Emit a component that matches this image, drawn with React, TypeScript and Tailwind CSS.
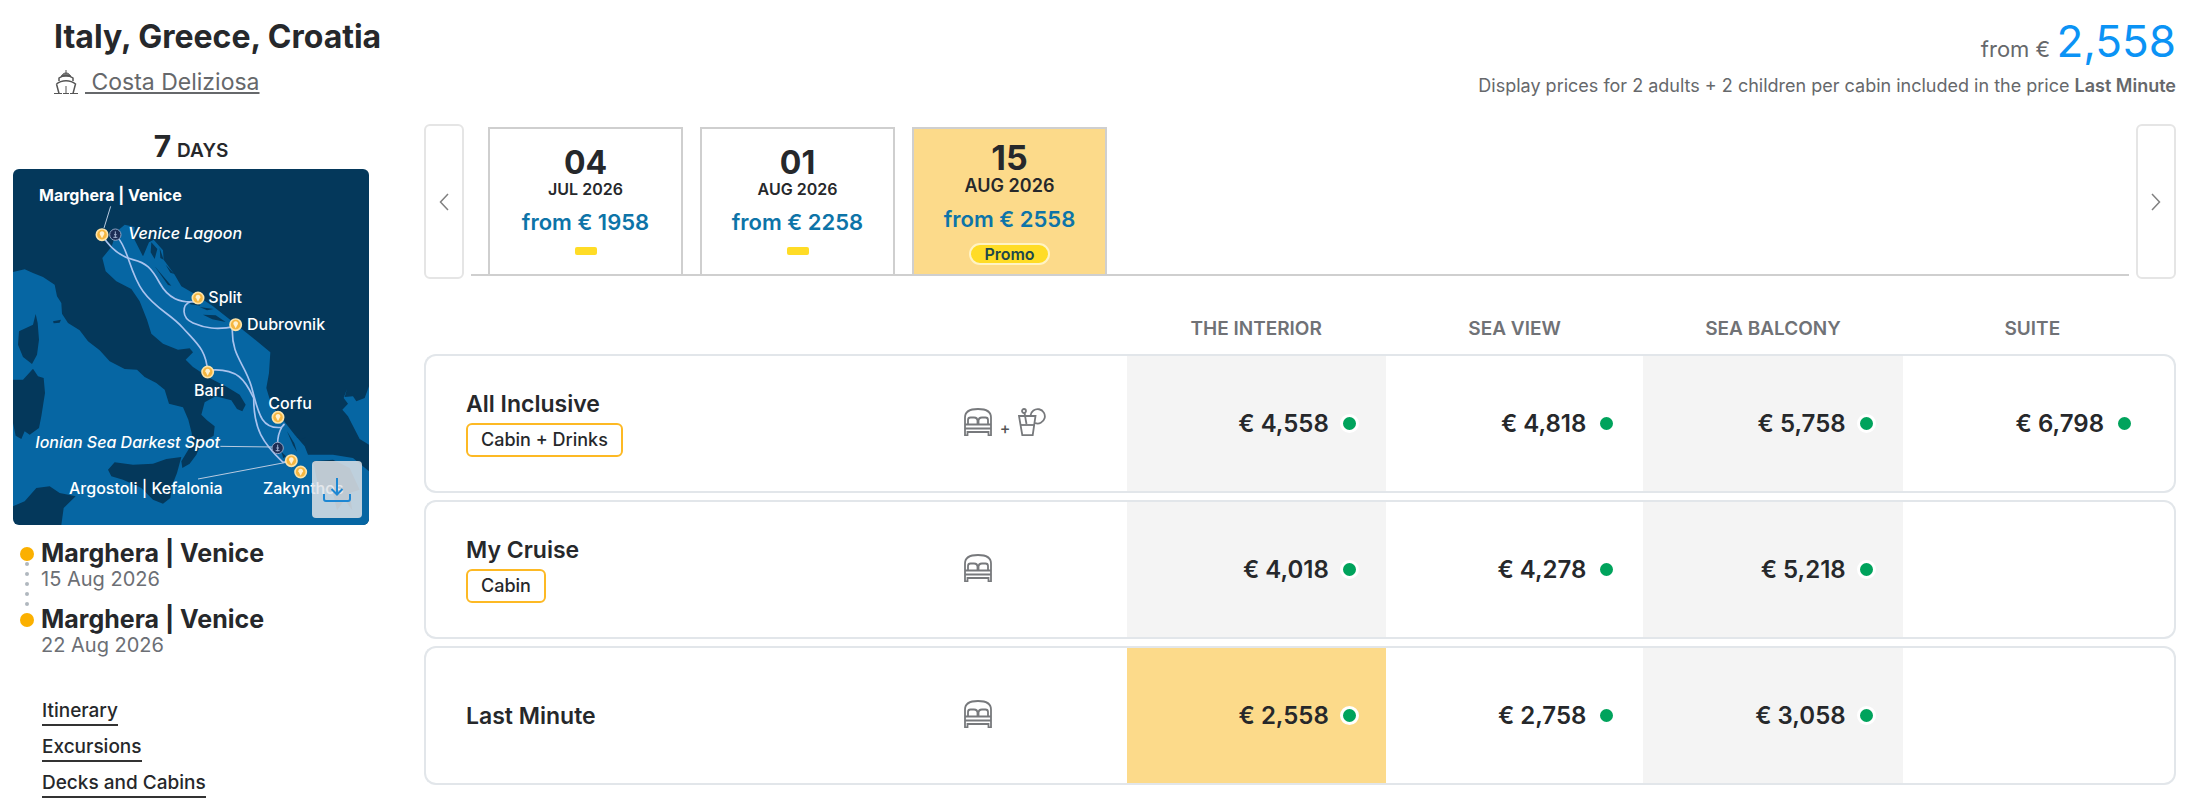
import { useState } from 'react'
import clsx from 'clsx'

interface Departure {
  day: string
  month: string
  price: number
  promo: string
}

interface Plan {
  name: string
  badge?: string
  drinks?: boolean
  prices: (string | null)[]
}

const departures: Departure[] = [
  { day: '04', month: 'JUL 2026', price: 1958, promo: '' },
  { day: '01', month: 'AUG 2026', price: 2258, promo: '' },
  { day: '15', month: 'AUG 2026', price: 2558, promo: 'Promo' },
]

const cabins = ['THE INTERIOR', 'SEA VIEW', 'SEA BALCONY', 'SUITE']

const plans: Plan[] = [
  { name: 'All Inclusive', badge: 'Cabin + Drinks', drinks: true, prices: ['4,558', '4,818', '5,758', '6,798'] },
  { name: 'My Cruise', badge: 'Cabin', prices: ['4,018', '4,278', '5,218', null] },
  { name: 'Last Minute', prices: ['2,558', '2,758', '3,058', null] },
]

const stops = [
  { port: 'Marghera | Venice', date: '15 Aug 2026' },
  { port: 'Marghera | Venice', date: '22 Aug 2026' },
]

const links = ['Itinerary', 'Excursions', 'Decks and Cabins']

const ports = [
  [307, 225],
  [595, 415],
  [708, 495],
  [624, 637],
  [835, 773],
  [875, 903],
  [903, 937],
]

const sights = [
  [347, 225],
  [834, 865],
]

function ShipIcon() {
  return (
    <svg viewBox="0 0 24 24" className="h-6 w-6 shrink-0" fill="none" stroke="#555" strokeWidth="1">
      <path d="M12 0v3M7.500 6c1-2 2.500-3 4.500-3s3.500 1 4.500 3z" fill="#777" />
      <path d="M5 11V8c4-3 10-3 14 0v3" strokeWidth="1.500" />
      <path d="M2.500 14c5-4.500 14-4.500 19 0l-2.500 9.500M2.500 14L5 23.500" strokeWidth="1.500" />
      <path d="M12 16v7" strokeWidth="2" stroke="#aaa" />
      <path d="M0 23.500h8M16 23.500h8M9 23.500h6" />
    </svg>
  )
}

function BedIcon() {
  return (
    <svg viewBox="0 0 28 28" className="h-7 w-7" fill="none" stroke="#77797c" strokeWidth="1.800">
      <path d="M1 27.500V9.500C1 4 6 1 14 1s13 3 13 8.500v18h-2.500V24h-21v3.500z" />
      <path d="M1 16.500h26M1 20.500h26" />
      <path d="M4 16.500v-4.500c0-1.500.800-2.500 2.500-2.500H10c2 0 3.500 1.500 3.500 3.500v3.500M14.500 16.500V13c0-2 1.500-3.500 3.500-3.500h3.500c1.700 0 2.500 1 2.500 2.500v4.500" />
    </svg>
  )
}

function DrinkIcon() {
  return (
    <svg viewBox="0 0 28 28" className="h-7 w-7" fill="none" stroke="#77797c" strokeWidth="1.800">
      <path d="M1 8h16.500l-2.800 19.200H4.300z" />
      <path d="M2.300 17h13.700" />
      <circle cx="6" cy="3" r="2" />
      <path d="M6.500 5l2 11" />
      <path d="M12.500 7.500A7.200 7.200 0 1 1 17 15" />
    </svg>
  )
}

function RouteMap() {
  return (
    <svg viewBox="40 28 1068 1068" className="block h-auto w-full rounded-md" role="img" aria-label="Route map">
      <rect x="40" y="28" width="1068" height="1068" fill="#04385b" />
      {/* Sea */}
      <path
        fill="#0666a3"
        d="M40 337L75 329L100 340L130 352L165 375L172 410L185 430L187 462L205 490L240 512L265 545L300 572L330 605L375 628L412 630L435 652L470 670L495 690L508 732L550 743L566 780L576 820L578 850L560 880L545 905L548 925L570 912L590 885L605 850L642 828L645 800L622 782L605 765L615 728L648 710L695 722L712 748L728 755L738 735L720 705L682 682L630 655L580 622L558 600L580 578L570 566L535 570L490 552L455 522L442 480L420 425L395 388L350 365L318 335L308 295L335 262L352 215L375 195L405 202L402 235L430 290L448 248L462 240L490 272L492 300L525 345L545 380L580 400L640 440L700 487L760 535L812 578L808 640L800 685L815 735L850 780L885 825L915 860L925 885L1000 885L1060 895L1108 935L1108 1096L185 1096L192 1045L228 1010L180 1000L150 980L110 985L75 1025L40 1040z"
      />
      <path fill="#0666a3" d="M1042 688L1035 712L1060 710L1070 725L1095 715L1108 680L1108 855L1080 838L1045 770L1028 750L1045 732L1032 715z" />
      {/* Islands */}
      <g fill="#04385b">
        <path d="M108 463L114 490L118 540L112 585L97 613L70 592L55 555L58 515L100 495z" />
        <path d="M100 627L115 650L132 655L136 700L125 770L118 805L90 825L75 815L65 838L48 828L40 790V660L70 660z" />
        <path d="M325 930L345 908L400 915L460 912L500 898L545 892L532 940L518 975L512 1015L490 1032L460 1020L425 985L370 960L335 950z" />
        <path d="M160 485l24-5l-4 9l-18 2z" />
        <path d="M455 248l18 20l-8 30l-12-20zM480 265l12 35l-10-5zM498 315l26 28l-12-4zM465 320l50 58l-10-2z" />
        <path d="M570 425l24 3l8 10l-30-4zM600 442l42 6l-20 4zM610 465l38 2l30 20l-40-8z" />
        <path d="M862 815l22 36l8 26l-12-20zM845 876l14 14l-8 6zM890 832h28l-8 6z" />
        <path d="M940 905L1000 900L1050 925L1080 990L1050 1000L1058 1052L1035 1020L1012 1052L1000 1000L955 975z" />
      </g>
      {/* Route */}
      <g fill="none" stroke="#a9c3ee" strokeWidth="5">
        <path d="M307 225C330 265 360 290 400 300S455 325 480 370S540 432 595 425" />
        <path d="M575 425C545 435 545 475 580 490S650 512 708 500" />
        <path d="M698 505C695 590 735 610 755 680S780 810 845 803C870 780 830 800 834 865" />
        <path d="M355 235C385 265 390 340 430 395S510 460 550 505S620 570 624 637" />
        <path d="M624 632C720 622 740 670 762 715C762 810 790 850 850 908L875 903" />
      </g>
      <path d="M333 140L313 205M662 860L820 862M595 958L860 908" fill="none" stroke="#b9cbe0" strokeWidth="3" />
      {ports.map(([x, y]) => (
        <g key={`${x}-${y}`}>
          <circle cx={x} cy={y} r="17" fill="#f5b640" stroke="#fde3a8" strokeWidth="5" />
          <path d={`M${x} ${y + 11}l-7-13a7 8 0 1 1 14 0z`} fill="#fff1cf" />
        </g>
      ))}
      {sights.map(([x, y]) => (
        <g key={`${x}-${y}`}>
          <circle cx={x} cy={y} r="17" fill="#1d2d55" stroke="#8fa3c4" strokeWidth="3" />
          <path d={`M${x} ${y - 10}v20m-6-2h12m-10-8h8`} stroke="#9fb0cf" strokeWidth="3" />
        </g>
      ))}
      <g fill="#fff" className="text-[48px] font-medium">
        <text x="118" y="124" className="font-bold">Marghera | Venice</text>
        <text x="385" y="238" className="italic">Venice Lagoon</text>
        <text x="626" y="431">Split</text>
        <text x="742" y="512">Dubrovnik</text>
        <text x="583" y="708">Bari</text>
        <text x="806" y="748">Corfu</text>
        <text x="107" y="866" className="italic">Ionian Sea Darkest Spot</text>
        <text x="208" y="1002">Argostoli | Kefalonia</text>
        <text x="790" y="1002">Zakynthos</text>
      </g>
    </svg>
  )
}

function Sidebar() {
  return (
    <aside className="w-[356px] shrink-0">
      <div className="flex h-[51px] items-baseline justify-center gap-[6px] pt-[10px] font-bold">
        <span className="text-[30px] leading-9">7</span>
        <span className="text-[19px] font-semibold">DAYS</span>
      </div>
      <div className="relative">
        <RouteMap />
        <button
          type="button"
          aria-label="Download map"
          className="absolute right-[7px] bottom-[7px] flex h-[57px] w-[50px] items-center justify-center rounded bg-[#dfe3e7]/85"
        >
          <svg viewBox="0 0 28 26" className="h-[26px] w-7" fill="none" stroke="#1d87d3" strokeWidth="2">
            <path d="M14 1v16M8.500 12l5.500 5.500l5.500-5.500M1 17v5a2 2 0 0 0 2 2h22a2 2 0 0 0 2-2v-5" />
          </svg>
        </button>
      </div>

      <ol className="mt-[15px] ml-[7px]">
        {stops.map((stop, i) => (
          <li key={stop.date} className="relative flex h-[66px] gap-[7px]">
            {i === 0 && (
              <span className="absolute top-[22px] left-[5px] flex flex-col gap-[6px]">
                {[0, 1, 2, 3, 4].map(n => (
                  <span key={n} className="size-1 rounded-full bg-[#b0b7be]" />
                ))}
              </span>
            )}
            <span className="relative mt-[7px] size-[14px] rounded-full bg-[#fbb000]" />
            <div>
              <p className="text-[25px] leading-[27px] font-bold">{stop.port}</p>
              <p className="text-[20px] leading-6 text-[#6c6f75]">{stop.date}</p>
            </div>
          </li>
        ))}
      </ol>

      <nav className="mt-[26px] ml-[29px] flex flex-col items-start gap-2">
        {links.map(link => (
          <a key={link} href="#" className="border-b-2 border-[#333] text-[19px] leading-[26px] font-medium">
            {link}
          </a>
        ))}
      </nav>
    </aside>
  )
}

function DateCarousel() {
  const [selected, setSelected] = useState(2)
  const arrow = 'flex w-10 shrink-0 items-center justify-center rounded-md border-2 border-[#e5e5e5]'

  return (
    <div className="flex h-[155px] gap-[7px]">
      <button type="button" aria-label="Previous dates" className={arrow}>
        <svg viewBox="0 0 10 18" className="h-[18px] w-[10px]" fill="none" stroke="#808080" strokeWidth="1.500">
          <path d="M9 1L1.500 9L9 17" />
        </svg>
      </button>
      <div className="mt-[3px] mb-[3px] flex flex-1 gap-[17px] border-b-2 border-[#cfcfcf] pl-[17px]">
        {departures.map((d, i) => (
          <button
            key={d.day + d.month}
            type="button"
            onClick={() => setSelected(i)}
            className={clsx(
              'flex w-[195px] flex-col items-center border-2 border-b-0 border-[#cfcfcf]',
              i === selected ? 'bg-[#fcda8a] pt-[11px]' : 'pt-[18px]'
            )}
          >
            <span className={clsx('font-bold', i === selected ? 'text-[34px] leading-9' : 'text-[32px] leading-8')}>{d.day}</span>
            <span className={clsx('leading-5 font-semibold', i === selected ? 'text-[18px]' : 'text-[16px]')}>{d.month}</span>
            <span className="mt-[11px] text-[22px] leading-6 font-semibold text-[#0d74a8]">from € {d.price}</span>
            {d.promo ? (
              <span className="mt-3 rounded-full border-2 border-[#fff3c4] bg-[#ffdc26] px-[13px] text-[16px] leading-[18px] font-semibold text-[#21484b]">
                {d.promo}
              </span>
            ) : (
              <span className="mt-[13px] h-2 w-[22px] rounded-xs bg-[#ffdc26]" />
            )}
          </button>
        ))}
      </div>
      <button type="button" aria-label="Next dates" className={arrow}>
        <svg viewBox="0 0 10 18" className="h-[18px] w-[10px]" fill="none" stroke="#808080" strokeWidth="1.500">
          <path d="M1 1l7.500 8L1 17" />
        </svg>
      </button>
    </div>
  )
}

function PriceTable() {
  return (
    <table className="mt-[22px] w-full table-fixed border-separate border-spacing-x-0 border-spacing-y-[7px]">
      <colgroup>
        <col className="w-[30.8%]" />
        <col className="w-[9.3%]" />
        <col className="w-[14.8%]" />
        <col className="w-[14.7%]" />
        <col className="w-[14.8%]" />
        <col className="w-[15.6%]" />
      </colgroup>
      <thead>
        <tr className="h-[39px]">
          <td colSpan={2} />
          {cabins.map((cabin, i) => (
            <th
              key={cabin}
              scope="col"
              className={clsx('pt-[2px] align-middle text-[19px] leading-6 font-semibold text-[#707276]', i === 3 && 'pr-[14px]')}
            >
              {cabin}
            </th>
          ))}
        </tr>
      </thead>
      <tbody>
        {plans.map(plan => (
          <tr key={plan.name} className="h-[139px]">
            <th scope="row" className="rounded-l-xl border-y-2 border-l-2 border-[#e2e6ea] pl-10 text-left">
              <div className="text-[23px] leading-7 font-semibold">{plan.name}</div>
              {plan.badge && (
                <span className="mt-[5px] inline-block rounded-md border-2 border-[#fdb924] px-[13px] text-[18px] leading-[30px] font-medium">
                  {plan.badge}
                </span>
              )}
            </th>
            <td className="border-y-2 border-[#e2e6ea] pb-[3px]">
              <div className="flex items-center gap-2">
                <BedIcon />
                {plan.drinks && (
                  <>
                    <span className="pt-3 text-[16px] leading-4 font-medium text-[#555]">+</span>
                    <DrinkIcon />
                  </>
                )}
              </div>
            </td>
            {plan.prices.map((price, i) => (
              <td
                key={cabins[i]}
                className={clsx(
                  'border-y-2 border-[#e2e6ea]',
                  i % 2 === 0 && (plan.name === 'Last Minute' && i === 0 ? 'bg-[#fcda8a]' : 'bg-[#f4f4f4]'),
                  i === 3 ? 'rounded-r-xl border-r-2 pr-10' : 'pr-[27px]'
                )}
              >
                {price && (
                  <div className="flex items-center justify-end gap-[11px]">
                    <span className="text-[24px] leading-7 font-semibold">€ {price}</span>
                    <span className="size-[19px] rounded-full border-[3px] border-white bg-[#00a35c]" />
                  </div>
                )}
              </td>
            ))}
          </tr>
        ))}
      </tbody>
    </table>
  )
}

export default function App() {
  return (
    <div className="bg-white font-['Inter','Open_Sans',sans-serif] text-[#26282b]">
      <header className="flex justify-between pt-[13px] pr-[17px] pl-[54px]">
        <div className="pt-[6px]">
          <h1 className="text-[32px] leading-9 font-bold">Italy, Greece, Croatia</h1>
          <div className="mt-3 flex items-center gap-[7px] text-[23px] leading-[30px] text-[#66686b]">
            <ShipIcon />
            <a href="#" className="whitespace-pre underline underline-offset-2">{' Costa Deliziosa'}</a>
          </div>
        </div>
        <div className="text-right text-[#66686b]">
          <p className="text-[22px] leading-none">
            from € <span className="text-[44px] leading-[56px] text-[#0b93f5]">2,558</span>
          </p>
          <p className="mt-[5px] text-[18px] leading-6">
            Display prices for 2 adults + 2 children per cabin included in the price{' '}
            <strong className="font-semibold">Last Minute</strong>
          </p>
        </div>
      </header>

      <div className="flex gap-[55px] pt-5 pr-[17px] pl-[13px]">
        <Sidebar />
        <main className="flex-1 pt-[6px]">
          <DateCarousel />
          <PriceTable />
        </main>
      </div>
    </div>
  )
}
